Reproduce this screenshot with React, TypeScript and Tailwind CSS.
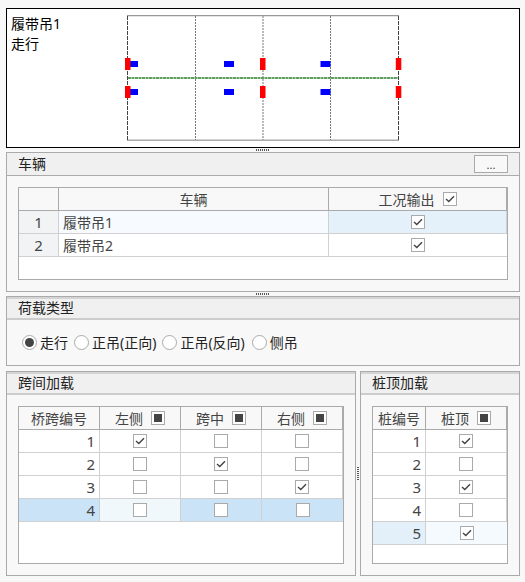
const font = "[font-family:'Noto_Sans','Noto_Sans_CJK_SC',sans-serif]";

function Check({ state }: { state?: "on" | "off" | "mixed" }) {
  return (
    <span className="flex h-[14px] w-[14px] shrink-0 items-center justify-center border border-[#aaaaaa] bg-white">
      {state === "on" && (
        <svg width="10" height="8" viewBox="0 0 10 8" fill="none">
          <path d="M1 4 L3.8 6.6 L9 1.2" stroke="#444444" strokeWidth="1.4" />
        </svg>
      )}
      {state === "mixed" && <span className="h-2 w-2 bg-[#444444]" />}
    </span>
  );
}

function Radio({ on }: { on?: boolean }) {
  return (
    <span className="flex h-[15px] w-[15px] shrink-0 items-center justify-center rounded-full border border-[#aaaaaa] bg-white">
      {on && <span className="h-[9px] w-[9px] rounded-full bg-[#444444]" />}
    </span>
  );
}

function Dots({ vertical }: { vertical?: boolean }) {
  return (
    <div className={vertical ? "flex w-1 shrink-0 items-center justify-center" : "flex h-1 items-center justify-center"}>
      <div
        className={
          vertical
            ? "h-[13px] w-[2px] bg-[repeating-linear-gradient(to_bottom,#555_0,#555_1px,transparent_1px,transparent_2px)]"
            : "h-[2px] w-[13px] bg-[repeating-linear-gradient(to_right,#555_0,#555_1px,transparent_1px,transparent_2px)]"
        }
      />
    </div>
  );
}

function Panel({
  title,
  className,
  bold,
  action,
  children,
}: {
  title: string;
  className: string;
  bold?: boolean;
  action?: React.ReactNode;
  children: React.ReactNode;
}) {
  return (
    <section className={`flex flex-col border border-[#aaaaaa] bg-[#f8f8f8] ${className}`}>
      <div
        className={`flex h-[23px] shrink-0 items-center justify-between bg-[#f0f0f0] px-[11px] text-[14px] text-[#222222] ${
          bold ? "border-y-2 border-t-[#d4d4d4] border-b-[#cccccc]" : "border-b border-[#aaaaaa]"
        }`}
      >
        <span className="pb-[2px]">{title}</span>
        {action}
      </div>
      {children}
    </section>
  );
}

function Cell({ className = "", children }: { className?: string; children?: React.ReactNode }) {
  return (
    <div className={`flex h-[23px] items-center border-b border-r border-[#d0d0d0] text-[14px] text-[#444444] last:border-r-0 ${className}`}>
      {children}
    </div>
  );
}

function HeadCell({ className = "", children }: { className?: string; children?: React.ReactNode }) {
  return (
    <div className={`flex h-[23px] items-center justify-center gap-2 border-b border-r border-[#aaaaaa] bg-[#f8f8f8] text-[14px] text-[#444444] last:border-r-0 ${className}`}>
      {children}
    </div>
  );
}

const spans = [
  { id: 1, checks: ["on", "off", "off"] },
  { id: 2, checks: ["off", "on", "off"] },
  { id: 3, checks: ["off", "off", "on"] },
  { id: 4, checks: ["off", "off", "off"] },
] as const;

const piles = [
  { id: 1, on: true },
  { id: 2, on: false },
  { id: 3, on: true },
  { id: 4, on: false },
  { id: 5, on: true },
];

function BridgeDrawing() {
  return (
    <svg className="absolute inset-0" width="512" height="138" viewBox="0 0 512 138">
      <line x1="120" y1="6.6" x2="392" y2="6.6" stroke="#999" strokeWidth="1.4" />
      <line x1="120" y1="131.2" x2="392" y2="131.2" stroke="#aaa" strokeWidth="1.6" />
      <line x1="120.5" y1="7" x2="120.5" y2="131" stroke="#444" strokeDasharray="4 1" />
      <line x1="391.5" y1="7" x2="391.5" y2="131" stroke="#444" strokeDasharray="4 1" />
      <line x1="188.5" y1="7" x2="188.5" y2="131" stroke="#777" strokeDasharray="2 1" />
      <line x1="256" y1="7" x2="256" y2="131" stroke="#aaa" strokeWidth="1.6" strokeDasharray="2 1" />
      <line x1="323.5" y1="7" x2="323.5" y2="131" stroke="#777" strokeDasharray="2 1" />
      <line x1="121" y1="69" x2="391" y2="69" stroke="#5f9f5f" strokeWidth="1.8" strokeDasharray="3 0.5" />
      {[52, 80].map((y) => (
        <g key={y} fill="#0000ff">
          <rect x="123" y={y} width="8" height="6" />
          <rect x="217" y={y} width="10" height="6" />
          <rect x="313.5" y={y} width="10" height="6" />
        </g>
      ))}
      {[49, 77].map((y) => (
        <g key={y} fill="#ff0000">
          <rect x="118" y={y} width="5.5" height="12" />
          <rect x="253" y={y} width="5.5" height="12" />
          <rect x="388.8" y={y} width="5.5" height="12" />
        </g>
      ))}
    </svg>
  );
}

export default function App() {
  return (
    <div className={`flex h-[582px] w-[525px] flex-col overflow-hidden bg-[#f8f8f8] px-[6px] pt-2 ${font}`}>
      {/* Drawing */}
      <div className="relative h-[140px] w-[514px] shrink-0 border border-black bg-white">
        <BridgeDrawing />
        <div className="absolute left-1 top-[5px] text-[14px] leading-[20px] text-black">
          <div>履带吊1</div>
          <div>走行</div>
        </div>
      </div>
      <Dots />

      {/* Vehicles */}
      <Panel
        title="车辆"
        className="h-[140px] w-[514px] shrink-0"
        action={
          <button className="flex h-[18px] w-[34px] items-end justify-center border border-[#aaaaaa] bg-[#f8f8f8] text-[11px] leading-[14px] text-[#444444]">
            ...
          </button>
        }
      >
        <div className="mx-[11px] mt-[11px] h-[93px] border border-[#aaaaaa] bg-white">
          <div className="grid grid-cols-[40px_270px_1fr]">
            <HeadCell />
            <HeadCell>车辆</HeadCell>
            <HeadCell>
              工况输出
              <Check state="on" />
            </HeadCell>
            <Cell className="justify-center bg-[#f2f3f5] text-[15px]">1</Cell>
            <Cell className="bg-[#f7fbff] pl-1">履带吊1</Cell>
            <Cell className="justify-center bg-[#e4f1fa]">
              <Check state="on" />
            </Cell>
            <Cell className="justify-center bg-[#f2f3f5] text-[15px]">2</Cell>
            <Cell className="pl-1">履带吊2</Cell>
            <Cell className="justify-center">
              <Check state="on" />
            </Cell>
          </div>
        </div>
      </Panel>
      <Dots />

      {/* Load type */}
      <Panel title="荷载类型" className="h-[70px] w-[514px] shrink-0" bold>
        <div className="flex flex-1 items-center pl-[15px] text-[14px] text-[#222222]">
          <Radio on />
          <span className="ml-[3px] mr-[6px]">走行</span>
          <Radio />
          <span className="ml-[3px] mr-[6px]">正吊(正向)</span>
          <Radio />
          <span className="ml-[3px] mr-[7px]">正吊(反向)</span>
          <Radio />
          <span className="ml-[3px]">侧吊</span>
        </div>
      </Panel>

      {/* Span and pile loading */}
      <div className="mt-[5px] flex h-[205px] w-[514px] shrink-0">
        <Panel title="跨间加载" className="w-[350px]" bold>
          <div className="mx-[11px] mt-[11px] h-[158px] border border-[#aaaaaa] bg-white">
            <div className="grid grid-cols-[81px_81px_81px_1fr]">
              <HeadCell>桥跨编号</HeadCell>
              <HeadCell>
                左侧
                <Check state="mixed" />
              </HeadCell>
              <HeadCell>
                跨中
                <Check state="mixed" />
              </HeadCell>
              <HeadCell>
                右侧
                <Check state="mixed" />
              </HeadCell>
              {spans.map((row) => {
                const selected = row.id === 4;
                return [
                  <Cell key={`n${row.id}`} className={`justify-end pr-1 text-[15px] ${selected ? "bg-[#cbe3f7]" : ""}`}>
                    {row.id}
                  </Cell>,
                  ...row.checks.map((state, i) => (
                    <Cell
                      key={`${row.id}-${i}`}
                      className={`justify-center ${selected ? (i === 0 ? "bg-[#f0f8fc]" : "bg-[#cbe3f7]") : ""}`}
                    >
                      <Check state={state} />
                    </Cell>
                  )),
                ];
              })}
            </div>
          </div>
        </Panel>
        <Dots vertical />
        <Panel title="桩顶加载" className="w-[160px]" bold>
          <div className="mx-[11px] mt-[11px] h-[158px] border border-[#aaaaaa] bg-white">
            <div className="grid grid-cols-[53px_1fr]">
              <HeadCell>桩编号</HeadCell>
              <HeadCell>
                桩顶
                <Check state="mixed" />
              </HeadCell>
              {piles.map((row) => {
                const selected = row.id === 5;
                return [
                  <Cell key={`n${row.id}`} className={`justify-end pr-1 text-[15px] ${selected ? "bg-[#e3f0fa]" : ""}`}>
                    {row.id}
                  </Cell>,
                  <Cell key={`c${row.id}`} className={`justify-center ${selected ? "bg-[#f5fafe]" : ""}`}>
                    <Check state={row.on ? "on" : "off"} />
                  </Cell>,
                ];
              })}
            </div>
          </div>
        </Panel>
      </div>
    </div>
  );
}
